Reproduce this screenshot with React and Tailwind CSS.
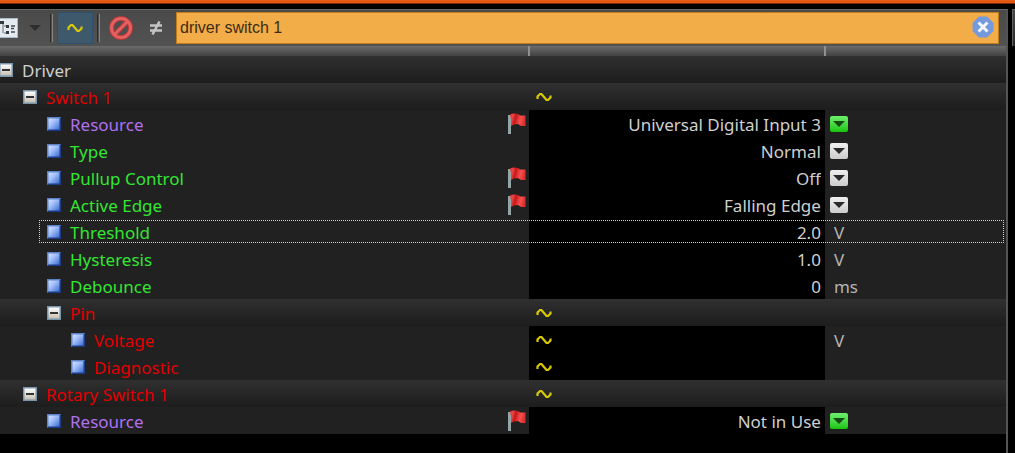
import { useState } from "react";
import clsx from "clsx";

const ROWS = [
  { name: "Driver", level: 0, group: true, color: "text-[#cfcfcf]" },
  { name: "Switch 1", level: 1, group: true, wave: true, color: "text-[#e00000]" },
  { name: "Resource", level: 2, flag: true, color: "text-[#b070f0]", options: ["Universal Digital Input 3", "Not in Use"], linked: true },
  { name: "Type", level: 2, color: "text-[#32e632]", options: ["Normal", "Inverted"] },
  { name: "Pullup Control", level: 2, flag: true, color: "text-[#32e632]", options: ["Off", "On"] },
  { name: "Active Edge", level: 2, flag: true, color: "text-[#32e632]", options: ["Falling Edge", "Rising Edge"] },
  { name: "Threshold", level: 2, color: "text-[#32e632]", value: "2.0", unit: "V", focused: true },
  { name: "Hysteresis", level: 2, color: "text-[#32e632]", value: "1.0", unit: "V" },
  { name: "Debounce", level: 2, color: "text-[#32e632]", value: "0", unit: "ms" },
  { name: "Pin", level: 2, group: true, wave: true, color: "text-[#e00000]" },
  { name: "Voltage", level: 3, wave: true, color: "text-[#e00000]", unit: "V" },
  { name: "Diagnostic", level: 3, wave: true, color: "text-[#e00000]" },
  { name: "Rotary Switch 1", level: 1, group: true, wave: true, color: "text-[#e00000]" },
  { name: "Resource", level: 2, flag: true, color: "text-[#b070f0]", options: ["Not in Use", "Universal Digital Input 3"], linked: true },
];

const INDENT = ["-ml-px", "pl-[23px]", "pl-[47px]", "pl-[71px]"];

function WaveIcon() {
  return (
    <svg width="16" height="10" viewBox="0 0 16 10" fill="none" stroke="#d8c800" strokeWidth="2.200">
      <path d="M1.500 7V4.500L4 2H5.500L8 5 10.500 8H12L14.500 5.500V3.500" />
    </svg>
  );
}

function FlagIcon() {
  return (
    <svg width="19" height="22" viewBox="0 0 19 22">
      <defs>
        <linearGradient id="flag" x1="0" x2="1" y1="0" y2="0.2">
          <stop offset="0" stopColor="#e82c2c" />
          <stop offset="0.2" stopColor="#f04444" />
          <stop offset="0.42" stopColor="#c01818" />
          <stop offset="0.55" stopColor="#e03030" />
          <stop offset="0.75" stopColor="#f65050" />
          <stop offset="1" stopColor="#dc3030" />
        </linearGradient>
      </defs>
      <path d="M1 2h3v19H1z" fill="#93a5a5" />
      <path d="M3 1.500Q6 0 11 1L13 2.500H18.500V13H14L11 11 7 11.500 4 13V6z" fill="url(#flag)" />
    </svg>
  );
}

function ItemIcon() {
  return (
    <svg width="14" height="14" viewBox="0 0 14 14" className="shrink-0">
      <defs>
        <linearGradient id="item" x1="0" x2="1" y1="0" y2="1">
          <stop offset="0" stopColor="#d4e2ff" />
          <stop offset="0.4" stopColor="#a4c0fa" />
          <stop offset="1" stopColor="#3c6cd0" />
        </linearGradient>
      </defs>
      <path d="M0 0h14v14H0z" fill="#1c3c88" />
      <path d="M0 0h14L12 2H2v10L0 14z" fill="#5c82c8" />
      <path d="M1.500 1.500h11v11h-11z" fill="url(#item)" />
    </svg>
  );
}

function CollapseIcon() {
  return (
    <svg width="14" height="14" viewBox="0 0 14 14">
      <defs>
        <linearGradient id="box" x1="0" x2="0" y1="0" y2="1">
          <stop offset="0" stopColor="#ffffff" />
          <stop offset="1" stopColor="#c8c0b0" />
        </linearGradient>
      </defs>
      <path d="M0 0h14v14H0z" fill="#7895ac" />
      <path d="M1.500 1.500h11v11h-11z" fill="url(#box)" />
      <path d="M3 6h8v2H3z" fill="#333333" />
    </svg>
  );
}

function TreeIcon() {
  return (
    <svg width="18" height="20" viewBox="0 0 18 20">
      <path d="M0 0h18v20H0z" fill="#a9bac4" />
      <path d="M0 1h17v18H0z" fill="#e4eaee" />
      <path d="M0 4h3M3 5v10M4 8h2M4 15h2" stroke="#607078" />
      <path d="M0 3h4v3H0zM6 7h3v3H6zM6 13h3v3H6z" fill="#303a40" />
      <path d="M11 8h4M11 10.500h3M11 14h4" stroke="#404a50" strokeWidth="1.500" />
    </svg>
  );
}

function ForbiddenIcon() {
  return (
    <svg width="24" height="24" viewBox="0 0 24 24" fill="none">
      <circle cx="12" cy="12" r="9.500" stroke="#b83838" strokeWidth="5" />
      <path d="M5.500 18.500l13-13" stroke="#b83838" strokeWidth="5" />
      <circle cx="12" cy="12" r="9.500" stroke="#e46060" strokeWidth="3" />
      <path d="M5.500 18.500l13-13" stroke="#e46060" strokeWidth="3" />
    </svg>
  );
}

function NotEqualIcon() {
  return (
    <svg width="14" height="14" viewBox="0 0 14 14" stroke="#c4c4c4" strokeWidth="2.500" fill="none">
      <path d="M1 4.500h12M1 9.500h12M10.500 0.500L3.500 13.500" />
    </svg>
  );
}

function ClearIcon() {
  return (
    <svg width="22" height="22" viewBox="0 0 22 22">
      <path d="M7 .5h8L21.500 7v8L15 21.500H7L.5 15V7z" fill="#7499dc" />
      <path d="M6.500 6.500l9 9M15.500 6.500l-9 9" stroke="#f4f6fc" strokeWidth="3" />
    </svg>
  );
}

function Separator() {
  return <span className="h-7 w-[3px] shrink-0 border-l border-r border-l-[#2c2c2c] border-r-[#858585]" />;
}

function DropButton({ label, linked }) {
  return (
    <button
      type="button"
      aria-label={label}
      className={clsx(
        "ml-[5px] flex h-4 w-[18px] items-center justify-center rounded-[2px]",
        linked
          ? "bg-linear-to-b from-[#6cf06c] to-[#14c400]"
          : "bg-linear-to-b from-[#f0f0f0] to-[#cccccc]",
      )}
    >
      <svg width="12" height="6" viewBox="0 0 12 6">
        <path d="M0 0h12L6 6z" fill={linked ? "#164a10" : "#2a2a2a"} />
      </svg>
    </button>
  );
}

function Row({ row, id, value, onChange }) {
  const { name, level, group, wave, flag, color, options, unit, focused, linked } = row;
  const field =
    "block h-[27px] w-full appearance-none bg-transparent pr-1 pt-[2px] text-right text-[#cfcfcf] outline-none";
  return (
    <tr
      className={clsx(
        "relative h-[27px]",
        group ? "bg-linear-to-b from-[#303030] to-[#1d1d1d]" : "bg-[#212121]",
      )}
    >
      <th scope="row" className="p-0 text-left font-normal">
        <div className={clsx("flex h-[27px] items-center gap-[9px]", INDENT[level])}>
          {group ? (
            <button type="button" aria-label={`Collapse ${name}`}>
              <CollapseIcon />
            </button>
          ) : (
            <ItemIcon />
          )}
          <label htmlFor={id} className={clsx("grow pt-[2px]", color)}>
            {name}
          </label>
          {flag && (
            <span className="pr-[3px]">
              <FlagIcon />
            </span>
          )}
        </div>
        {focused && (
          <div className="pointer-events-none absolute inset-y-[2px] right-[2px] left-[39px] border border-dotted border-[#d0d0d0]" />
        )}
      </th>
      <td className={clsx("p-0", !group && "bg-black")}>
        {wave && (
          <span className="block pl-[7px]">
            <WaveIcon />
          </span>
        )}
        {options && (
          <select id={id} value={value} onChange={onChange} className={clsx(field, "[text-align-last:right]")}>
            {options.map((option) => (
              <option key={option}>{option}</option>
            ))}
          </select>
        )}
        {row.value && <input id={id} type="text" value={value} onChange={onChange} className={field} />}
      </td>
      <td className="p-0 text-[#b4b4b4]">
        {options && <DropButton label={`Choose ${name}`} linked={linked} />}
        {unit && <span className="block pl-[9px] pt-[2px]">{unit}</span>}
      </td>
    </tr>
  );
}

export default function App() {
  const [search, setSearch] = useState("driver switch 1");
  const [values, setValues] = useState(ROWS.map((row) => row.value ?? row.options?.[0]));

  const handleChange = (index) => (e) => {
    const next = [...values];
    next[index] = e.target.value;
    setValues(next);
  };

  return (
    <div className="flex min-h-screen flex-col bg-black font-['Noto_Sans',sans-serif] text-[17px] leading-6">
      <div className="h-1 border-b border-[#7c2c08] bg-[#e45a14]" />
      <div className="mt-[5px] flex grow gap-1">
        <main className="min-w-0 grow border-t border-r-2 border-t-[#686868] border-r-[#545454]">
          <div className="flex h-9 items-center bg-linear-to-b from-[#4a4a4a] to-[#525252] pr-[7px]">
            <button type="button" aria-label="Tree view">
              <TreeIcon />
            </button>
            <button type="button" aria-label="View options" className="pr-[9px] pl-[11px]">
              <svg width="12" height="6" viewBox="0 0 12 6">
                <path d="M0 0h12L6 6z" fill="#2e2e2e" />
              </svg>
            </button>
            <Separator />
            <button
              type="button"
              aria-label="Signals"
              aria-pressed="true"
              className="mx-1 flex h-8 w-9 items-center justify-center border border-[#2c5070] bg-[#3e586c]"
            >
              <WaveIcon />
            </button>
            <Separator />
            <button type="button" aria-label="Clear filter" className="ml-[9px]">
              <ForbiddenIcon />
            </button>
            <button type="button" aria-label="Show differences" className="mr-[13px] ml-4">
              <NotEqualIcon />
            </button>
            <div className="relative grow">
              <input
                type="text"
                aria-label="Search"
                value={search}
                onChange={(e) => setSearch(e.target.value)}
                className="block h-8 w-full border border-[#c07c18] bg-[#f2ac48] pr-8 pl-[3px] font-['Liberation_Sans',sans-serif] text-[16px] text-[#3c2c14] outline-none"
              />
              <button
                type="button"
                aria-label="Clear search"
                className="absolute top-[4px] right-[5px]"
                onClick={() => setSearch("")}
              >
                <ClearIcon />
              </button>
            </div>
          </div>
          <table className="w-full table-fixed border-collapse">
            <thead>
              <tr className="h-[10px] bg-linear-to-b from-[#6c6c6c] to-[#424242]">
                <th aria-label="Name" className="w-[52.6%] border-r-2 border-[#909090] p-0" />
                <th aria-label="Value" className="w-[29.4%] border-r-2 border-[#909090] p-0" />
                <th aria-label="Unit" className="p-0" />
              </tr>
            </thead>
            <tbody>
              {ROWS.map((row, index) => (
                <Row
                  key={index}
                  row={row}
                  id={`field-${index}`}
                  value={values[index]}
                  onChange={handleChange(index)}
                />
              ))}
            </tbody>
          </table>
        </main>
        <aside className="h-[37px] w-[3px] shrink-0 border-t border-l border-[#606060] bg-linear-to-b from-[#484848] to-[#282828]" />
      </div>
    </div>
  );
}
